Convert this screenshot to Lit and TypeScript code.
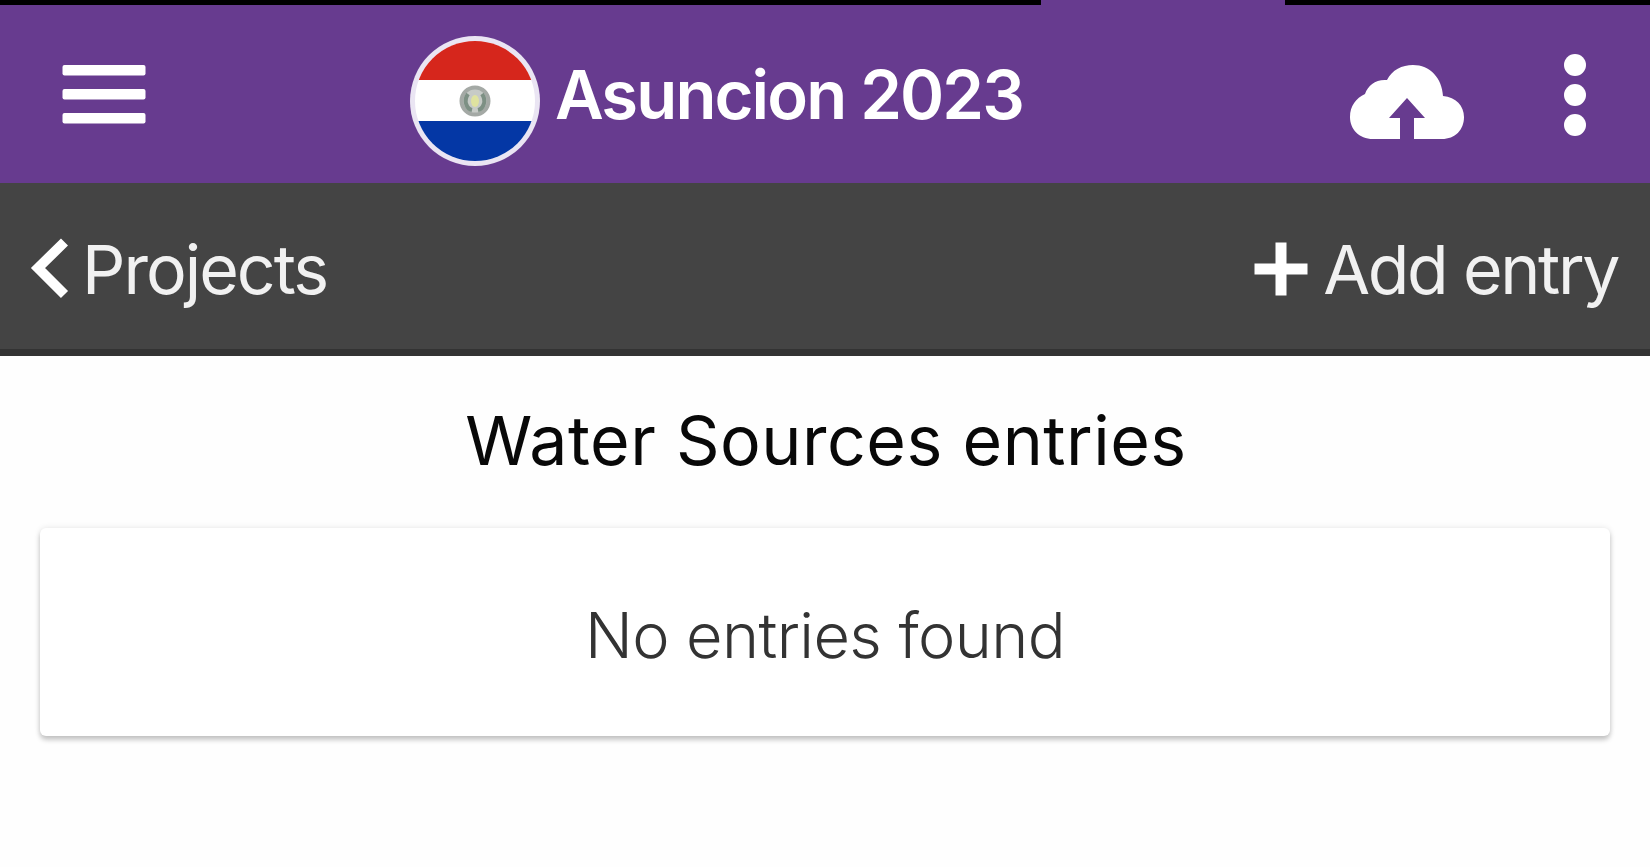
import { LitElement, html, css } from "lit";
import { customElement } from "lit/decorators.js";

@customElement("app-root")
export class AppRoot extends LitElement {
  static styles = css`
    :host { display: block; height: 867px; background: #fefefe; overflow: hidden; font-family: Inter, Roboto, sans-serif; }
    .page { display: flex; flex-direction: column; height: 100%; }
    .status { display: grid; grid-template-columns: 1041px 244px 1fr; height: 5px; background: #000; }
    .gap { grid-column: 2; background: #673b8f; }
    .top { display: flex; align-items: flex-start; height: 178px; background: #673b8f; color: #fff; }
    .top svg, .sub svg { display: block; flex: none; }
    .menu { margin: 57px 0 0 60px; }
    .flag { margin: 29px 0 0 260px; }
    .title { margin: 50px 0 0 13px; font-size: 67px; font-weight: 560; line-height: 80px; width: 793px; white-space: nowrap; letter-spacing: -1.9px; }
    .cloud { margin: 58px 0 0 0; }
    .dots { margin: 46px 0 0 95px; }
    .sub { box-sizing: border-box; display: flex; align-items: flex-start; height: 173px; background: #444; color: #f1f1f1; border-bottom: 7px solid #333; font-size: 68px; line-height: 80px; white-space: nowrap; }
    .chev { margin: 53px 0 0 29px; }
    .back { margin: 46px 0 0 9px; letter-spacing: -2px; }
    .plus { margin: 59px 0 0 auto; }
    .add { margin: 46px 32px 0 15px; letter-spacing: -2.4px; }
    h1 { margin: 44px 0 0; padding-left: 2px; font-size: 68px; line-height: 80px; font-weight: 400; text-align: center; color: #080808; letter-spacing: 0.5px; }
    .card { box-sizing: border-box; display: flex; align-items: center; justify-content: center; margin: 48px 40px 0; padding-top: 5px; height: 208px; background: #fff; border-radius: 6px; box-shadow: 0 4px 5px rgba(0,0,0,.2), 0 0 6px rgba(0,0,0,.1); font-size: 63px; line-height: 76px; font-weight: 300; color: #333; letter-spacing: -0.6px; }
  `;

  render() {
    return html`
      <div class="page">
        <div class="status"><div class="gap"></div></div>
        <div class="top">
          <svg class="menu" width="88" height="66" viewBox="60 62 88 66" fill="#fff">
            <rect x="62.500" y="65" width="83" height="10.5" rx="2" />
            <rect x="62.500" y="89" width="83" height="10.5" rx="2" />
            <rect x="62.500" y="113" width="83" height="10.5" rx="2" />
          </svg>
          <svg class="flag" width="134" height="134" viewBox="-67 -67 134 134">
            <defs><clipPath id="c"><circle r="60" /></clipPath></defs>
            <circle r="65" fill="#eae5f3" />
            <g clip-path="url(#c)">
              <rect x="-65" y="-65" width="130" height="130" fill="#fff" />
              <rect x="-65" y="-65" width="130" height="44" fill="#d6261c" />
              <rect x="-65" y="20" width="130" height="46" fill="#0437a5" />
            </g>
            <circle r="13.5" fill="#c7cbc7" stroke="#a4a9a5" stroke-width="4" />
            <path d="M-7-7C-12 0-8 8-3 9M7-7C12 0 8 8 3 9" fill="none" stroke="#7d9084" stroke-width="4" />
            <ellipse rx="4" ry="6" fill="#dfe3a0" />
          </svg>
          <div class="title">Asuncion 2023</div>
          <svg class="cloud" width="118" height="80" viewBox="1348 63 118 80">
            <path fill="#fff" d="M1373 139C1359 139 1350 129 1350 117C1350 106 1356 98 1365 94C1368 85 1376 79 1387 80C1392 70 1402 65 1413 65C1430 65 1442 78 1443 96C1456 97 1464 106 1464 117C1464 130 1455 139 1442 139H1414V118H1425L1407 98L1389 118H1400V139Z" />
          </svg>
          <svg class="dots" width="28" height="88" viewBox="1561 50 28 88" fill="#fff">
            <circle cx="1575" cy="64" r="11" /><circle cx="1575" cy="94" r="11" /><circle cx="1575" cy="124" r="11" />
          </svg>
        </div>
        <div class="sub">
          <svg class="chev" width="44" height="64" viewBox="28 236 44 64" fill="none" stroke="#fff" stroke-width="10">
            <path d="M63.500 242L37 268L63.500 294.500" />
          </svg>
          <div class="back">Projects</div>
          <svg class="plus" width="54" height="54" viewBox="-27 -27 54 54" stroke="#fff" stroke-width="11">
            <path d="M-26.500 0H26.500M0-26.500V26.500" />
          </svg>
          <div class="add">Add entry</div>
        </div>
        <h1>Water Sources entries</h1>
        <div class="card">No entries found</div>
      </div>
    `;
  }
}
